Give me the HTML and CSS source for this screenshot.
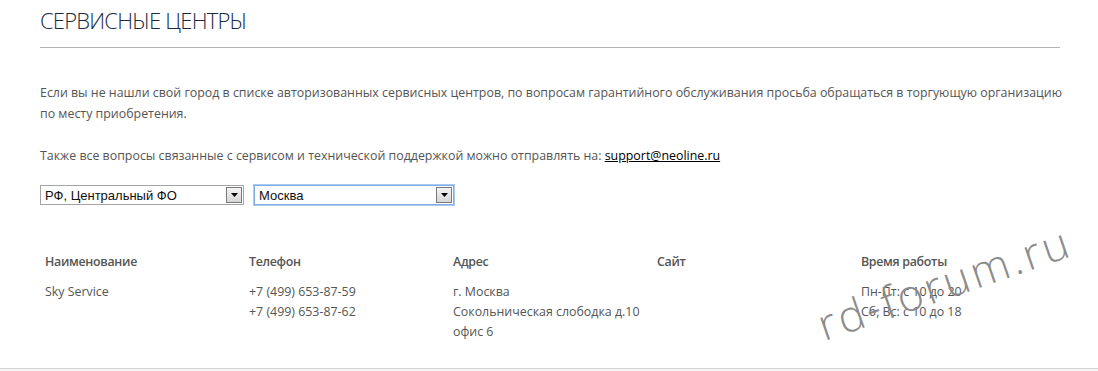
FILE: index.html
```html
<!DOCTYPE html>
<html lang="ru">
<head>
<meta charset="utf-8">
<title>Сервисные центры</title>
<link rel="stylesheet" href="styles.css">
</head>
<body>
<div class="page">
  <div class="content">
    <h1 class="title">СЕРВИСНЫЕ ЦЕНТРЫ</h1>
    <p class="text first">Если вы не нашли свой город в списке авторизованных сервисных центров, по вопросам гарантийного обслуживания просьба обращаться в торгующую организацию по месту приобретения.</p>
    <p class="text">Также все вопросы связанные с сервисом и технической поддержкой можно отправлять на: <a class="mail" href="#">support@neoline.ru</a></p>
    <div class="selects">
      <div class="select region">
        <span class="select-value">РФ, Центральный ФО</span>
        <span class="select-btn"><svg width="7" height="4" viewBox="0 0 7 4"><path d="M0 0H7L3.5 4Z" fill="#000"/></svg></span>
      </div>
      <div class="select city focused">
        <span class="select-value">Москва</span>
        <span class="select-btn"><svg width="7" height="4" viewBox="0 0 7 4"><path d="M0 0H7L3.5 4Z" fill="#000"/></svg></span>
      </div>
    </div>
    <table class="centers">
      <thead>
        <tr><th>Наименование</th><th>Телефон</th><th>Адрес</th><th>Сайт</th><th>Время работы</th></tr>
      </thead>
      <tbody>
        <tr>
          <td>Sky Service</td>
          <td>+7 (499) 653-87-59<br>+7 (499) 653-87-62</td>
          <td>г. Москва<br>Сокольническая слободка д.10<br>офис 6</td>
          <td></td>
          <td>Пн-Пт: с 10 до 20<br>Сб, Вс: с 10 до 18</td>
        </tr>
      </tbody>
    </table>
  </div>
  <div class="footer"></div>
  <div class="watermark">rd-forum.ru</div>
</div>
</body>
</html>
```

FILE: styles.css
```css
html, body {
  margin: 0;
  padding: 0;
  background: #fff;
}
.page {
  position: relative;
  width: 1098px;
  height: 371px;
  overflow: hidden;
  font-family: "Open Sans", "Noto Sans", sans-serif;
  color: #555;
}
.content {
  padding: 5px 38px 0 40px;
}
.title {
  margin: 0;
  padding: 0 0 12px 0;
  font-family: "Open Sans", sans-serif;
  font-weight: 300;
  font-size: 22px;
  letter-spacing: -0.8px;
  line-height: 30px;
  color: #1a2a44;
  border-bottom: 1px solid #b3b3b3;
}
.text {
  margin: 21px -6px 0 0;
  font-size: 12.4px;
  line-height: 21px;
  color: #555;
}
.text.first {
  margin-top: 34px;
}
.mail {
  color: #000;
  text-decoration: underline;
}
.selects {
  display: flex;
  gap: 10px;
  margin-top: 19px;
}
.select {
  box-sizing: border-box;
  height: 20px;
  display: flex;
  align-items: center;
  justify-content: space-between;
  border: 1px solid #a5a5a5;
  padding: 0 1px 0 4px;
  font-family: "Liberation Sans", Arial, sans-serif;
  font-size: 13px;
  color: #111;
  background: #fff;
}
.select.region { width: 204px; }
.select.city { width: 200px; }
.select.focused {
  border-color: #7eaee6;
  box-shadow: 0 0 0 1px #a9c9ef;
}
.select-btn {
  box-sizing: border-box;
  width: 16px;
  height: 16px;
  display: flex;
  align-items: center;
  justify-content: center;
  border: 1px solid #7a7a7a;
  background: linear-gradient(#f4f4f4, #d6d6d6);
}
.centers {
  margin-top: 47px;
  width: 1020px;
  border-collapse: collapse;
  table-layout: fixed;
  font-size: 12.4px;
  line-height: 20px;
}
.centers th, .centers td {
  text-align: left;
  vertical-align: top;
  padding: 0 0 0 5px;
  white-space: nowrap;
}
.centers th {
  font-weight: 600;
  letter-spacing: -0.3px;
  color: #555;
  padding-bottom: 10px;
}
.centers td {
  color: #555;
  padding-bottom: 26px;
}
.footer {
  height: 10px;
  border-top: 1px solid #d4d4d4;
  background: #f6f6f6;
}
.watermark {
  position: absolute;
  left: 826px;
  top: 302px;
  font-family: "Open Sans", sans-serif;
  font-weight: 300;
  font-size: 44px;
  line-height: 44px;
  letter-spacing: 3px;
  color: #8c8c8c;
  transform: rotate(-19deg);
  transform-origin: left bottom;
  white-space: nowrap;
}
```
